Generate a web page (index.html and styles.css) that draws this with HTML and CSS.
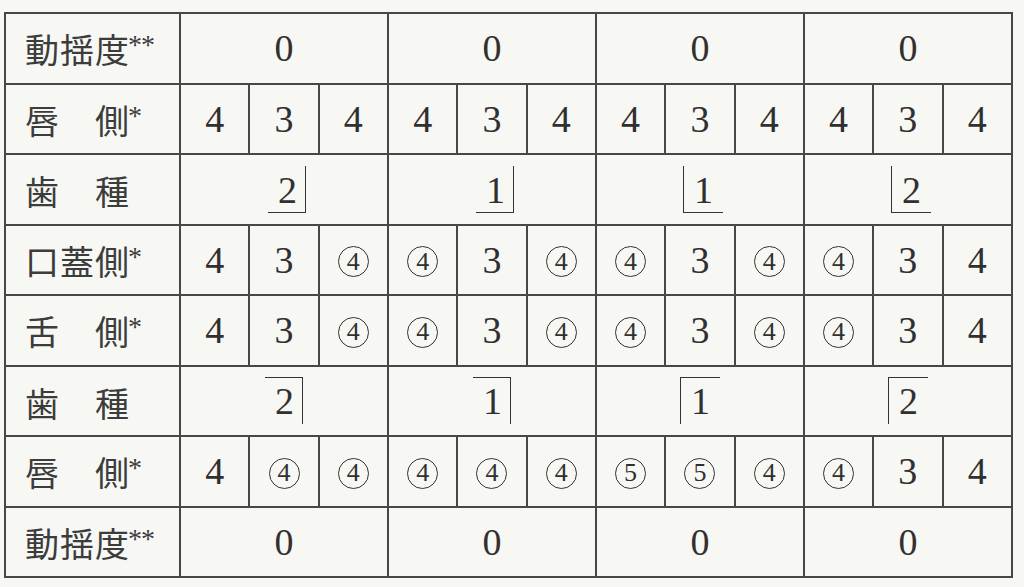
FILE: index.html
```html
<!DOCTYPE html>
<html lang="ja">
<head>
<meta charset="utf-8">
<title>動揺度・ポケット深さ</title>
<link rel="stylesheet" href="styles.css">
</head>
<body>
<div class="sheet">
<table class="chart">
  <colgroup>
    <col class="c-label">
    <col><col><col><col><col><col><col><col><col><col><col><col>
  </colgroup>
  <tbody>
    <tr>
      <th class="label">動揺度<span class="ast">**</span></th>
      <td colspan="3">0</td><td colspan="3">0</td><td colspan="3">0</td><td colspan="3">0</td>
    </tr>
    <tr>
      <th class="label">唇　側<span class="ast">*</span></th>
      <td>4</td><td>3</td><td>4</td><td>4</td><td>3</td><td>4</td><td>4</td><td>3</td><td>4</td><td>4</td><td>3</td><td>4</td>
    </tr>
    <tr>
      <th class="label">歯　種</th>
      <td colspan="3"><span class="q q-b q-r">2</span></td>
      <td colspan="3"><span class="q q-b q-r">1</span></td>
      <td colspan="3"><span class="q q-b q-l">1</span></td>
      <td colspan="3"><span class="q q-b q-l">2</span></td>
    </tr>
    <tr>
      <th class="label">口蓋側<span class="ast">*</span></th>
      <td>4</td><td>3</td><td><span class="c">4</span></td><td><span class="c">4</span></td><td>3</td><td><span class="c">4</span></td><td><span class="c">4</span></td><td>3</td><td><span class="c">4</span></td><td><span class="c">4</span></td><td>3</td><td>4</td>
    </tr>
    <tr>
      <th class="label">舌　側<span class="ast">*</span></th>
      <td>4</td><td>3</td><td><span class="c">4</span></td><td><span class="c">4</span></td><td>3</td><td><span class="c">4</span></td><td><span class="c">4</span></td><td>3</td><td><span class="c">4</span></td><td><span class="c">4</span></td><td>3</td><td>4</td>
    </tr>
    <tr>
      <th class="label">歯　種</th>
      <td colspan="3"><span class="q q-t q-r">2</span></td>
      <td colspan="3"><span class="q q-t q-r">1</span></td>
      <td colspan="3"><span class="q q-t q-l">1</span></td>
      <td colspan="3"><span class="q q-t q-l">2</span></td>
    </tr>
    <tr>
      <th class="label">唇　側<span class="ast">*</span></th>
      <td>4</td><td><span class="c">4</span></td><td><span class="c">4</span></td><td><span class="c">4</span></td><td><span class="c">4</span></td><td><span class="c">4</span></td><td><span class="c">5</span></td><td><span class="c">5</span></td><td><span class="c">4</span></td><td><span class="c">4</span></td><td>3</td><td>4</td>
    </tr>
    <tr>
      <th class="label">動揺度<span class="ast">**</span></th>
      <td colspan="3">0</td><td colspan="3">0</td><td colspan="3">0</td><td colspan="3">0</td>
    </tr>
  </tbody>
</table>
</div>
</body>
</html>
```
FILE: styles.css
```css
html, body {
  margin: 0;
  padding: 0;
  background: #f7f7f4;
}

.sheet {
  padding: 12px 0 0 4px;
}

.chart {
  border-collapse: collapse;
  table-layout: fixed;
  width: 1009px;
  color: #303030;
}

.chart col {
  width: 69.3px;
}

.chart col.c-label {
  width: 175px;
}

.chart tr {
  height: 70.5px;
}

.chart th,
.chart td {
  border: 2px solid #474747;
  padding: 0;
  text-align: center;
  vertical-align: middle;
  font-family: "Liberation Serif", "Times New Roman", serif;
  font-size: 38px;
  font-weight: normal;
  line-height: 1;
}

.chart th.label {
  text-align: left;
  padding-left: 19px;
  padding-top: 4px;
  font-family: "Noto Sans CJK JP", "Noto Sans", sans-serif;
  font-size: 34px;
  letter-spacing: 1px;
  color: #3c3c3c;
  white-space: nowrap;
}

.ast {
  font-family: "Liberation Serif", serif;
  font-size: 28px;
  letter-spacing: -1px;
  position: relative;
  top: -9px;
  margin-left: -2px;
}

.c {
  display: inline-flex;
  align-items: center;
  justify-content: center;
  box-sizing: border-box;
  width: 31px;
  height: 31px;
  border: 1.5px solid #333333;
  border-radius: 50%;
  font-size: 26px;
  line-height: 1;
  vertical-align: middle;
  position: relative;
  top: -2px;
}

.q {
  display: inline-block;
  line-height: 1;
  border-color: #333333;
  border-style: solid;
  border-width: 0;
}

.q-b {
  padding: 5px 0 3px 0;
  position: relative;
  left: 3px;
}

.q-t {
  padding: 4px 0 4px 0;
}

.q-b { border-bottom-width: 1.5px; }
.q-t { border-top-width: 1.5px; }

.q-r {
  border-right-width: 1.5px;
  padding-left: 10px;
  padding-right: 8px;
}

.q-l {
  border-left-width: 1.5px;
  padding-left: 10px;
  padding-right: 10px;
}
```
